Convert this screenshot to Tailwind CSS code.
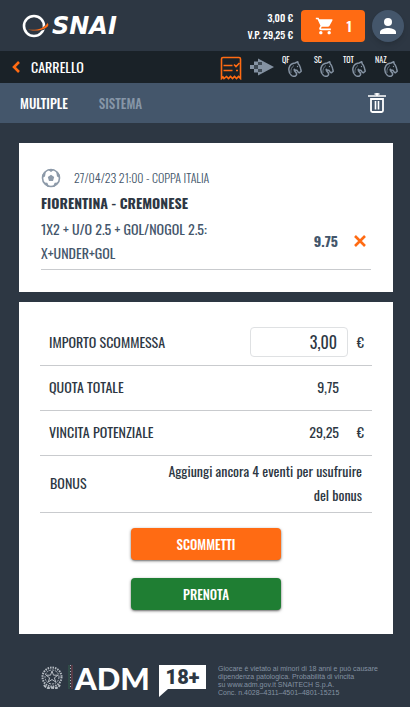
<!DOCTYPE html>
<html lang="it">
  <head>
    <meta charset="UTF-8" />
    <meta name="viewport" content="width=device-width, initial-scale=1.0" />
    <title>Carrello</title>
    <script src="https://cdn.jsdelivr.net/npm/@tailwindcss/browser@4"></script>
  </head>

  <body class="bg-[#2d3743] text-[#2d3743] font-['Oswald','Liberation_Sans_Narrow','Roboto_Condensed','Roboto',sans-serif] text-sm">
    <!-- shared symbols -->
    <svg class="hidden">
      <symbol id="horse" viewBox="0 0 14 16">
        <path
          d="M3.500 14.500C1.200 12.500 0.500 9.500 1 7C1.800 4 4.200 2.200 7 2L9.800 0.800L10.200 2.800C11.500 4 12.200 5.500 12.500 7.200L13.200 10.200L11.500 11.800L10.200 11.200L9 9.300C7.800 9.600 7 9 6.300 8.200C5.800 9.600 7 10.500 8 11.500C9 13 8.500 14.300 7.500 15C6 15.500 4.500 15.300 3.500 14.500Z"
          fill="none"
          stroke="currentColor"
          stroke-width="1.500"
          stroke-linejoin="round"
        />
        <path d="M3 12C2.500 9 3.500 6 6 4.500" fill="none" stroke="currentColor" stroke-width="0.700" />
        <circle cx="9.500" cy="5.500" r="0.700" fill="currentColor" />
      </symbol>
    </svg>

    <header class="flex h-[51px] items-center pr-[6px] pl-[22px]">
      <a href="#" class="flex items-center text-white" aria-label="SNAI">
        <svg class="h-7 w-7" viewBox="0 0 28 28">
          <circle cx="12" cy="14" r="10" fill="none" stroke="#fff" stroke-width="2.600" />
          <path d="M5 17.500C13 19 22 18 24.500 10.500C28.500 14 25 17.500 19 18.800C13.500 20 8 19.500 5 17.500Z" fill="#2d3743" />
          <path d="M6 17.500C14 18.500 22 17 25.500 11C28 13.500 25 16.300 19.500 17.700C14.500 19 9.500 18.800 6 17.500Z" fill="#ff6b13" />
        </svg>
        <span class="ml-[2px] font-['DejaVu_Sans',sans-serif] text-[24px] leading-7 font-bold italic">SNAI</span>
      </a>
      <div class="ml-auto text-right text-[10px] leading-[17px] font-medium text-white">
        <p>3,00 €</p>
        <p>V.P. 29,25 €</p>
      </div>
      <button type="button" class="ml-2 flex h-8 w-16 items-center justify-between rounded bg-[#ff6b13] pr-[13px] pl-[14px] text-sm font-semibold text-white">
        <svg class="h-5 w-5" viewBox="0 0 24 24" fill="currentColor">
          <path d="M7 18c-1.100 0-1.990.9-1.990 2S5.900 22 7 22s2-.9 2-2-.9-2-2-2zM1 2v2h2l3.600 7.590-1.350 2.450c-.16.28-.25.61-.25.96 0 1.100.9 2 2 2h12v-2H7.420c-.14 0-.25-.11-.25-.25l.03-.12.9-1.630h7.450c.75 0 1.410-.41 1.750-1.030l3.580-6.490A1.003 1.003 0 0 0 20 4H5.210l-.94-2H1zm16 16c-1.100 0-1.990.9-1.990 2s.89 2 1.990 2 2-.9 2-2-.9-2-2-2z" />
        </svg>
        1
      </button>
      <button type="button" aria-label="Profilo" class="ml-[7px] flex h-8 w-8 items-center justify-center rounded-full bg-[#44566b] text-white shadow-md">
        <svg class="h-6 w-6" viewBox="0 0 24 24" fill="currentColor">
          <circle cx="12" cy="8" r="4" />
          <path d="M12 14c-2.670 0-8 1.340-8 4v2h16v-2c0-2.660-5.330-4-8-4z" />
        </svg>
      </button>
    </header>

    <nav class="flex h-8 items-center bg-[#1a2228] pr-3 pl-3 text-white">
      <a href="#" class="flex items-center gap-[11px] text-sm">
        <svg class="h-3 w-2" viewBox="0 0 8 12">
          <path d="M7 1L2 6L7 11" fill="none" stroke="#ff6b13" stroke-width="2.600" />
        </svg>
        CARRELLO
      </a>
      <div class="ml-auto flex items-center text-[#8492a2]">
        <a href="#" aria-label="Scommesse" class="mt-[2px] text-[#ff6b13]">
          <svg class="h-6 w-[22px]" viewBox="0 0 22 24" fill="none" stroke="currentColor" stroke-width="1.600">
            <path d="M1.500 22.500V3Q1.500 1.500 3 1.500H19Q20.500 1.500 20.500 3V22.500L18.500 20.500L16.500 22.500L14.500 20.500L12.500 22.500L10.500 20.500L8.500 22.500L6.500 20.500L4 22.500L3 21Z" />
            <path d="M3.500 9.500H12.500M3.500 14.500H12.500M16 14.500H18M14 8.500L16 10.500L19.500 7" />
          </svg>
        </a>
        <a href="#" aria-label="Virtuali" class="ml-2">
          <svg class="h-[18px] w-6" viewBox="0 0 24 18" fill="currentColor">
            <path d="M8 0.500L24 9L8 17.500V14H12V11H8V7H12V4H8Z" />
            <path d="M4 3.500H8V7H4ZM0 7H4V11H0ZM4 11H8V14.500H4Z" />
            <path d="M4 7H8V11H4ZM8 4H12V7H8ZM8 11H12V14H8Z" opacity="0.350" />
          </svg>
        </a>
        <a href="#" class="ml-[8px] flex">
          <span class="h-6 w-[6px] text-[8px] leading-[8px] text-white">QF</span>
          <svg class="mt-[6px] h-4 w-[14px]"><use href="#horse" /></svg>
        </a>
        <a href="#" class="ml-3 flex">
          <span class="h-6 w-[6px] text-[8px] leading-[8px] text-white">SC</span>
          <svg class="mt-[6px] h-4 w-[14px]"><use href="#horse" /></svg>
        </a>
        <a href="#" class="ml-[9px] flex">
          <span class="h-6 w-[9px] text-[8px] leading-[8px] text-white">TOT</span>
          <svg class="mt-[6px] h-4 w-[14px]"><use href="#horse" /></svg>
        </a>
        <a href="#" class="ml-[9px] flex">
          <span class="h-6 w-[9px] text-[8px] leading-[8px] text-white">NAZ</span>
          <svg class="mt-[6px] h-4 w-[14px]"><use href="#horse" /></svg>
        </a>
      </div>
    </nav>

    <div class="flex h-10 items-center bg-[#44566b] pr-6 pl-5">
      <button type="button" class="text-[13px] font-medium text-white">MULTIPLE</button>
      <button type="button" class="ml-[31px] text-[13px] font-medium text-[#8796a8]">SISTEMA</button>
      <button type="button" aria-label="Svuota carrello" class="ml-auto text-white">
        <svg class="h-5 w-[18px]" viewBox="0 0 18 20" fill="none" stroke="currentColor">
          <path d="M0 3H18M9 0V3M6.500 1H11.500" stroke-width="1.600" />
          <path d="M3 6V17.500Q3 19 4.500 19H13.500Q15 19 15 17.500V6Z" stroke-width="1.800" />
          <path d="M7.500 8V16.500M10.500 8V16.500" stroke-width="1.600" />
        </svg>
      </button>
    </div>

    <main class="mr-[17px] ml-[19px] mt-5">
      <section class="bg-white px-[22px] pt-[23px] pb-[22px] text-[#44566b]">
        <div class="flex h-6 items-center gap-[13px] text-xs font-light">
          <svg class="h-5 w-5" viewBox="0 0 20 20">
            <circle cx="10" cy="10" r="8.500" fill="#fff" stroke="#8d9aa9" stroke-width="1.600" />
            <path d="M10 6.800L13.200 9.100L12 12.900H8L6.800 9.100ZM6.500 1.500L10 4L13.500 1.500Q10 0.500 6.500 1.500ZM1 10L4 8.500L4.800 4L3 4.200Q1 6.500 1 10ZM19 10L16 8.500L15.200 4L17 4.200Q19 6.500 19 10ZM2.500 14.500L6.300 14.700L7.800 18L7 19Q4 17.500 2.500 14.500ZM17.500 14.500L13.700 14.700L12.200 18L13 19Q16 17.500 17.500 14.500Z" fill="#8d9aa9" />
          </svg>
          <p>27/04/23 21:00 - COPPA ITALIA</p>
        </div>
        <h2 class="pb-[2px] text-sm leading-[25px] font-bold text-[#2d3743]">FIORENTINA - CREMONESE</h2>
        <div class="flex items-center border-b border-[#c9cbce] pr-[5px] pb-1">
          <p class="w-[180px] text-sm leading-6">1X2 + U/O 2.5 + GOL/NOGOL 2.5: X+UNDER+GOL</p>
          <p class="ml-auto text-sm font-bold">9.75</p>
          <button type="button" aria-label="Rimuovi" class="ml-4">
            <svg class="h-3 w-3" viewBox="0 0 12 12">
              <path d="M1 1L11 11M11 1L1 11" stroke="#ff6b13" stroke-width="2.600" />
            </svg>
          </button>
        </div>
      </section>

      <form class="mt-[10px] bg-white px-[21px] pt-[19px] pb-6">
        <div class="flex h-[45px] items-center border-b border-[#c9cbce] px-2 pb-[2px]">
          <label for="importo" class="pl-px">IMPORTO SCOMMESSA</label>
          <input id="importo" type="text" value="3,00" class="ml-auto h-[30px] w-[98px] rounded border border-[#dfe1e3] pr-[10px] text-right text-base" />
          <span class="w-4 text-right">€</span>
        </div>
        <div class="flex h-[45px] items-center border-b border-[#c9cbce] px-2 pb-[2px]">
          <span class="pl-px">QUOTA TOTALE</span>
          <span class="mr-[25px] ml-auto">9,75</span>
        </div>
        <div class="flex h-[45px] items-center border-b border-[#c9cbce] px-2 pb-[2px]">
          <span class="pl-px">VINCITA POTENZIALE</span>
          <span class="ml-auto">29,25</span>
          <span class="w-[25px] text-right">€</span>
        </div>
        <div class="flex h-[57px] items-center justify-between border-b border-[#c9cbce] px-[10px] pb-[2px]">
          <span>BONUS</span>
          <p class="w-[200px] text-right leading-6">Aggiungi ancora 4 eventi per usufruire del bonus</p>
        </div>
        <div class="mt-[15px] flex flex-col items-center gap-[18px] text-[13px] font-medium text-white">
          <button type="button" class="h-8 w-[150px] rounded bg-[#ff6b13] shadow-sm shadow-black/50">SCOMMETTI</button>
          <button type="button" class="h-8 w-[150px] rounded bg-[#1f7e33] shadow-sm shadow-black/50">PRENOTA</button>
        </div>
      </form>
    </main>

    <footer class="flex items-start pt-[31px] pl-[41px] text-white">
      <svg class="h-[26px] w-[22px]" viewBox="0 0 22 26" fill="none" stroke="#b6bcc3">
        <circle cx="11" cy="12" r="9.500" stroke-width="2" stroke-dasharray="1.500 1" />
        <circle cx="11" cy="12" r="7" stroke-dasharray="2 1" />
        <path d="M11 6L12.500 10.200H17L13.400 12.800L14.700 17L11 14.500L7.300 17L8.600 12.800L5 10.200H9.500Z" />
        <path d="M3 20Q6 24.500 11 22.500Q16 24.500 19 20" stroke-width="2" stroke-dasharray="3 1" />
      </svg>
      <svg class="ml-[5px] h-6 w-[5px]" viewBox="0 0 5 24">
        <path d="M1 0V24" stroke="#35614f" />
        <path d="M2.500 0V24" stroke="#a9b0b8" stroke-dasharray="1 2" />
        <path d="M4 0V24" stroke="#81404a" />
      </svg>
      <span class="ml-[2px] w-[74px] font-['Lato',sans-serif] text-[31px] leading-[26px] font-black">ADM</span>
      <div class="ml-[10px] w-[47px]">
        <p class="h-6 bg-white text-center font-['Roboto',sans-serif] text-[20px] leading-[25px] font-black text-[#2d3743]">18+</p>
        <svg class="h-2 w-[9px]" viewBox="0 0 9 8"><path d="M0 0H9L0 8Z" fill="#fff" /></svg>
      </div>
      <p class="ml-3 font-['Liberation_Sans',sans-serif] text-[7px] leading-[8px] whitespace-nowrap text-[#8492a2]">
        Giocare è vietato ai minori di 18 anni e può causare<br />
        dipendenza patologica. Probabilità di vincita<br />
        su www.adm.gov.it SNAITECH S.p.A.<br />
        Conc. n.4028–4311–4501–4801-15215
      </p>
    </footer>
  </body>
</html>
